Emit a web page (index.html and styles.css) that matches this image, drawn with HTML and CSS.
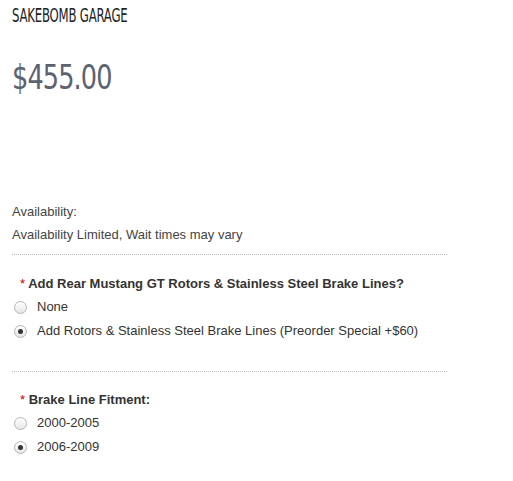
FILE: index.html
```html
<!DOCTYPE html>
<html>
<head>
<meta charset="utf-8">
<link rel="stylesheet" href="styles.css">
</head>
<body>
<div class="product">
  <div class="brand"><span class="squeeze">SAKEBOMB GARAGE</span></div>
  <div class="price"><span class="squeeze">$455.00</span></div>
  <div class="avail">
    <div class="avail-label">Availability:</div>
    <div class="avail-value">Availability Limited, Wait times may vary</div>
  </div>
  <div class="option">
    <div class="opt-label"><span class="req">*</span> Add Rear Mustang GT Rotors &amp; Stainless Steel Brake Lines?</div>
    <label class="radio"><span class="dot"></span>None</label>
    <label class="radio"><span class="dot on"></span>Add Rotors &amp; Stainless Steel Brake Lines (Preorder Special +$60)</label>
  </div>
  <div class="option">
    <div class="opt-label"><span class="req">*</span> Brake Line Fitment:</div>
    <label class="radio"><span class="dot"></span>2000-2005</label>
    <label class="radio"><span class="dot on"></span>2006-2009</label>
  </div>
</div>
</body>
</html>
```
FILE: styles.css
```css
html, body { margin: 0; padding: 0; background: #fff; }
body { font-family: "Liberation Sans", Arial, sans-serif; color: #333; }
.product { padding: 0 12px; width: 435px; }
.squeeze { display: inline-block; transform-origin: left center; }
.brand {
  font-family: "DejaVu Sans Condensed", "DejaVu Sans", sans-serif;
  font-stretch: condensed;
  font-size: 20px;
  line-height: 30px;
  color: #222;
  letter-spacing: -0.3px;
}
.brand .squeeze { transform: scaleX(0.65); }
.price {
  font-family: "DejaVu Sans Condensed", "DejaVu Sans", sans-serif;
  font-stretch: condensed;
  font-size: 33px;
  line-height: 40px;
  margin-top: 28px;
  color: #5b6270;
  letter-spacing: -1px;
}
.price .squeeze { transform: scaleX(0.86); }
.avail { margin-top: 102px; font-size: 13px; color: #444; padding-bottom: 8px; border-bottom: 1px dotted #bbb; }
.avail-label { line-height: 23px; }
.avail-value { line-height: 23px; }
.option { padding: 18px 0 28px; border-bottom: 1px dotted #bbb; }
.option:last-child { border-bottom: none; padding-top: 17px; }
.opt-label { font-weight: bold; font-size: 13px; line-height: 22px; padding-left: 8px; color: #333; }
.req { color: #c00; font-weight: normal; }
.radio { display: flex; align-items: center; font-size: 13px; line-height: 24px; color: #333; }
.dot {
  width: 11px; height: 11px; border-radius: 50%;
  border: 1px solid #b5b5b5; background: linear-gradient(#fff, #e6e6e6);
  margin: 0 10px 0 2px; box-sizing: content-box; position: relative;
}
.dot.on::after {
  content: ""; position: absolute; left: 3px; top: 3px;
  width: 5px; height: 5px; border-radius: 50%; background: #333;
}
```
